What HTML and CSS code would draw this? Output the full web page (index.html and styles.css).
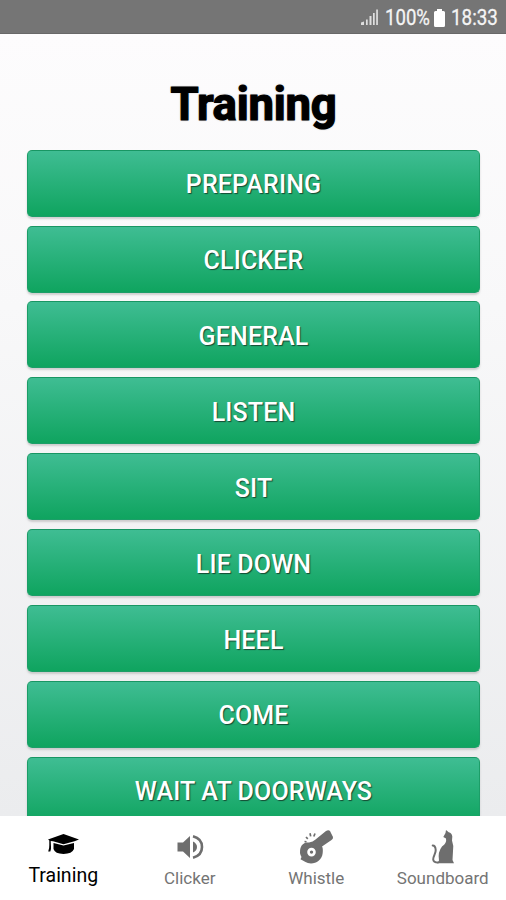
FILE: index.html
```html
<!DOCTYPE html>
<html lang="en">
<head>
<meta charset="utf-8">
<title>Training</title>
<link rel="stylesheet" href="styles.css">
</head>
<body>
<div class="app">
  <header class="status">
    <svg class="signal" width="18" height="17" viewBox="0 0 18 17"><path d="M0 16V13.500L3 12.500V16zM5 16V10.500h1.700V16zM8.500 16V7h2V16zM12 16V4h1.700V16zM15.200 16V.5h1.700V16z"/></svg>
    <span class="percent">100%</span>
    <svg class="battery" width="11" height="18" viewBox="0 0 11 18"><path d="M3 0h5v2h1.500Q11 2 11 3.500V16.500Q11 18 9.500 18h-8Q0 18 0 16.500V3.500Q0 2 1.500 2H3z"/></svg>
    <span class="time">18:33</span>
  </header>
  <main class="content">
    <h1 class="title">Training</h1>
    <div class="list">
      <button class="item">PREPARING</button>
      <button class="item">CLICKER</button>
      <button class="item">GENERAL</button>
      <button class="item">LISTEN</button>
      <button class="item">SIT</button>
      <button class="item">LIE DOWN</button>
      <button class="item">HEEL</button>
      <button class="item">COME</button>
      <button class="item">WAIT AT DOORWAYS</button>
    </div>
  </main>
  <nav class="tabs">
    <a class="tab active">
      <svg class="icon" width="40" height="40" viewBox="0 0 40 40"><path d="M5 13.500 20.500 8 36 13.500 31.500 15.300 20.500 18.200 10 15.300 7.700 15 8 20.500Q8.300 23.500 7.300 25.500H5.200Q6.500 22 6.300 19V14.500zM10.500 17 20.500 19.600 31 17V23Q29 27.900 20.500 27.900T10.500 23z"/></svg>
      <span class="label">Training</span>
    </a>
    <a class="tab">
      <svg class="icon" width="40" height="40" viewBox="0 0 40 40"><path d="M7.500 16.500H13L20 10V32L13 25.500H7.500zM23 15.500Q27 17.500 27 21T23 26.500z"/><path class="line" d="M23 10.300C29.500 12 32 16.500 32 21S29.500 30 23 31.700"/></svg>
      <span class="label">Clicker</span>
    </a>
    <a class="tab">
      <svg class="icon" width="40" height="40" viewBox="0 0 40 40"><path fill-rule="evenodd" d="M13 16.500Q17 15.800 19.500 13.500L30 5Q32.500 3.500 34 5L37 11Q37.300 12.800 35.500 14L26 20.500Q27.200 22 26.700 27C26 34 20.500 37.400 15 37.400Q11.500 37.400 9.500 36L4.500 33.200 5.500 31Q3 27 4.500 22T11 16.500zM15.500 21.800a4.300 4.300 0 1 0 0 8.600a4.300 4.300 0 1 0 0-8.600z"/><circle cx="15.500" cy="26.100" r="1.700"/><path class="spark" d="M10 11l1.800 1.800M14 7.200l.7 3.200M19 7.500l-1.200 3M8.500 15.500l2 .3"/></svg>
      <span class="label">Whistle</span>
    </a>
    <a class="tab">
      <svg class="icon cat" width="40" height="40" viewBox="0 0 40 40"><path d="M21 4 23.700 6.300Q27 7 27.300 10.500L27 14.500Q29 20 28 25L27.500 34 29 37.300H12L14 34.500Q12.500 26 17 20.500 22 17 21 12.500L18.300 11 20.500 7z"/><path class="tail" d="M13 36.500Q8.500 36.500 8.200 33.500C8 30 11 27.500 10.700 24Q10.400 19.500 7.700 19.500"/></svg>
      <span class="label">Soundboard</span>
    </a>
  </nav>
</div>
</body>
</html>
```
FILE: styles.css
```css
* { box-sizing: border-box; }
body { margin: 0; font-family: Roboto, sans-serif; }
.app {
  width: 506px;
  height: 900px;
  display: flex;
  flex-direction: column;
  overflow: hidden;
  background: #fff;
}
.status {
  flex: none;
  height: 34px;
  display: flex;
  align-items: center;
  justify-content: flex-end;
  padding: 2px 8px 0 0;
  color: #f4f4f4;
  background: #757575;
  border-bottom: 1px solid #686868;
  font-size: 21.500px;
  line-height: 32px;
}
.status svg { fill: #fff; }
.status .signal { margin-right: 6px; fill: #dedede; }
.percent, .time {
  white-space: nowrap;
  transform-origin: left;
  -webkit-text-stroke: .3px #f4f4f4;
}
.percent { width: 45px; transform: scaleX(.865); }
.battery { margin: 0 6px 0 4px; }
.time { width: 47px; transform: scaleX(.875); }
.content {
  flex: 1;
  min-height: 0;
  overflow: hidden;
  padding: 42px 26px 0 27px;
  background: linear-gradient(#fdfcfd, #f8f8f9 35%, #ebecee);
}
.title {
  margin: 0;
  height: 73.700px;
  padding-top: 1px;
  font-size: 45.500px;
  line-height: 56px;
  letter-spacing: -.25px;
  font-weight: 700;
  text-align: center;
  color: #000;
  -webkit-text-stroke: 1.200px #000;
  text-shadow: 0 0 2px #777;
}
.list { display: flex; flex-direction: column; gap: 8.900px; }
.item {
  flex: none;
  height: 67px;
  padding: 4px 0 0;
  border: 1px solid #1c9e68;
  border-top-color: #189663;
  border-radius: 5px;
  background: linear-gradient(#3fbd93, #0fa45f);
  box-shadow: 0 2px 2px #aaa8;
  color: #fff;
  font: 500 25px/30px Roboto, sans-serif;
  letter-spacing: .15px;
  text-align: center;
  text-shadow: 1px 1px 1px #164a33;
}
.tabs {
  flex: none;
  height: 84px;
  display: flex;
  background: #fff;
}
.tab {
  flex: 1;
  display: flex;
  flex-direction: column;
  align-items: center;
  padding-top: 10px;
  color: #747474;
  font-size: 17px;
}
.icon { flex: none; fill: #6e6e6e; }
.cat { margin-left: 5px; }
.line { fill: none; stroke: #6e6e6e; stroke-width: 2.600; }
.tail { fill: none; stroke: #6e6e6e; stroke-width: 2; stroke-linecap: round; }
.spark { fill: none; stroke: #6e6e6e; stroke-width: 1.700; }
.label { line-height: 22px; margin-top: 1px; }
.active { color: #000; font-size: 19.500px; }
.active .icon { fill: #000; }
.active .label { margin-top: -1px; }
```
